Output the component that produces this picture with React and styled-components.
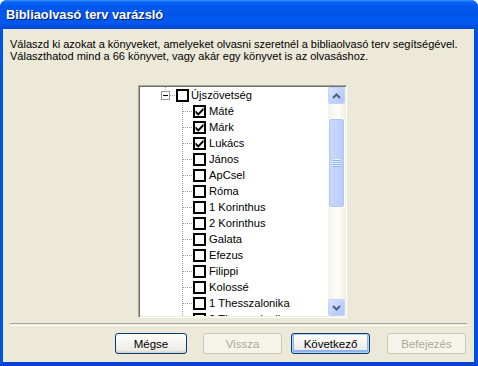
import React from 'react'
import styled, { createGlobalStyle } from 'styled-components'

const GlobalStyle = createGlobalStyle`
  html, body {
    margin: 0;
    padding: 0;
    background: #ffffff;
  }
  body {
    font-family: "Liberation Sans", Arial, sans-serif;
    font-size: 11px;
    color: #000;
  }
`

const books = [
  { name: 'Máté', checked: true },
  { name: 'Márk', checked: true },
  { name: 'Lukács', checked: true },
  { name: 'János' },
  { name: 'ApCsel' },
  { name: 'Róma' },
  { name: '1 Korinthus' },
  { name: '2 Korinthus' },
  { name: 'Galata' },
  { name: 'Efezus' },
  { name: 'Filippi' },
  { name: 'Kolossé' },
  { name: '1 Thesszalonika' },
  { name: '2 Thesszalonika' },
]

const Window = styled.div`
  width: 478px;
  height: 366px;
  display: flex;
  flex-direction: column;
  box-sizing: border-box;
  overflow: hidden;
  border-radius: 7px 7px 0 0;
  background: #0054e3;
`

const TitleBar = styled.div`
  height: 29px;
  flex: none;
  display: flex;
  align-items: center;
  padding-left: 6px;
  padding-bottom: 1px;
  box-sizing: border-box;
  background: linear-gradient(
    to bottom,
    #3d95ff 0,
    #0a66f5 2px,
    #0058ee 6px,
    #0055e8 50%,
    #0058ee 80%,
    #0046d4 100%
  );
  color: #fff;
  font-weight: bold;
  font-size: 12.8px;
  text-shadow: 1px 1px 0 #0a1f70;
`

const Frame = styled.div`
  flex: 1;
  display: flex;
  flex-direction: column;
  background: #ece9d8;
  border-left: 3px solid #0055e5;
  border-right: 4px solid #0050e0;
  border-bottom: 4px solid #0742d0;
`

const Intro = styled.p`
  margin: 9px 0 0 7px;
  line-height: 12px;
  font-size: 11px;
`

const ListBox = styled.div`
  margin: 23px 0 0 135px;
  width: 209px;
  height: 233px;
  box-sizing: border-box;
  background: #fff;
  border-top: 1px solid #aca899;
  border-left: 1px solid #aca899;
  border-right: 1px solid #fff;
  border-bottom: 1px solid #fff;
  box-shadow: inset 1px 1px 0 #716f64, inset -1px -1px 0 #f1efe2;
  padding: 1px;
  display: flex;
  overflow: hidden;
`

const Tree = styled.div`
  flex: 1;
  overflow: hidden;
`

const dotsV = `repeating-linear-gradient(to bottom, #a0a0a0 0 1px, transparent 1px 2px)`
const dotsH = `repeating-linear-gradient(to right, #a0a0a0 0 1px, transparent 1px 2px)`

const Row = styled.div`
  position: relative;
  height: 16px;
  display: flex;
  align-items: center;
  padding-left: ${({ $indent }) => $indent}px;
`

const RootLines = styled.span`
  position: absolute;
  left: 25px;
  top: 0;
  width: 1px;
  height: 4px;
  background: ${dotsV};
  &::after {
    content: '';
    position: absolute;
    left: 5px;
    top: 8px;
    width: 6px;
    height: 1px;
    background: ${dotsH};
  }
`

const ChildLines = styled.span`
  position: absolute;
  left: 42px;
  top: 0;
  width: 1px;
  height: 16px;
  background: ${dotsV};
  &::after {
    content: '';
    position: absolute;
    left: 1px;
    top: 8px;
    width: 10px;
    height: 1px;
    background: ${dotsH};
  }
`

const Expander = styled.span`
  position: absolute;
  left: 21px;
  top: 4px;
  width: 9px;
  height: 9px;
  box-sizing: border-box;
  border: 1px solid #919b9c;
  background: #fff;
  &::after {
    content: '';
    position: absolute;
    left: 1px;
    top: 3px;
    width: 5px;
    height: 1px;
    background: #000;
  }
`

const Box = styled.span`
  width: 13px;
  height: 13px;
  flex: none;
  box-sizing: border-box;
  border: 2px solid #000;
  background: #fff;
  display: flex;
  align-items: center;
  justify-content: center;
`

const Label = styled.span`
  margin-left: ${({ $gap }) => $gap}px;
  white-space: nowrap;
  line-height: 16px;
  font-size: 11.2px;
`

const ScrollBar = styled.div`
  width: 17px;
  flex: none;
  display: flex;
  flex-direction: column;
  background: linear-gradient(to right, #f3f1ec, #fefefb 60%, #f0efe8);
`

const ArrowButton = styled.div`
  width: 17px;
  height: 17px;
  box-sizing: border-box;
  border: 1px solid #fff;
  border-radius: 2px;
  background: linear-gradient(135deg, #dbe6fd, #bcd0fb 60%, #b0c6f8);
  outline: 1px solid #c3d3fd;
  outline-offset: -1px;
  display: flex;
  align-items: center;
  justify-content: center;
`

const Track = styled.div`
  flex: 1;
  padding-top: 14px;
`

const Thumb = styled.div`
  height: 90px;
  box-sizing: border-box;
  border: 1px solid #fff;
  border-radius: 3px;
  background: linear-gradient(to right, #c9d8fc, #c2d3fd 50%, #b8cbf9);
  box-shadow: inset 0 0 0 1px #b2c6f4;
  display: flex;
  align-items: center;
  justify-content: center;
`

const Grip = styled.span`
  width: 7px;
  height: 8px;
  background: repeating-linear-gradient(
    to bottom,
    #eef4fe 0 1px,
    #8cb0f8 1px 2px
  );
`

const Separator = styled.div`
  margin: auto 7px 0 7px;
  height: 1px;
  border-top: 1px solid #aca899;
  border-bottom: 1px solid #fff;
`

const ButtonRow = styled.div`
  display: flex;
  padding: 7px 0 8px 112px;
`

const Button = styled.button`
  width: ${({ $w }) => $w}px;
  height: 21px;
  margin-right: ${({ $mr }) => $mr}px;
  box-sizing: border-box;
  font-family: "Liberation Sans", Arial, sans-serif;
  font-size: 11.5px;
  padding: 0;
  border-radius: 3px;
  border: 1px solid #003c74;
  color: #000;
  background: linear-gradient(to bottom, #fff 0, #f6f5f0 40%, #ecebe6 85%, #d6d0c5 100%);
  ${({ $default }) =>
    $default &&
    `
    box-shadow: inset 0 0 0 1px #b9d1fa, inset 0 -1px 0 2px #92b1ef;
  `}
  &:disabled {
    border-color: #c9c7ba;
    background: #f5f4ea;
    color: #aca899;
  }
`

const Check = () => (
  <svg width="9" height="9" viewBox="0 0 9 9">
    <path d="M0.5 3.2 L3.2 5.9 L8.5 0.6 L8.5 3.4 L3.2 8.7 L0.5 6 Z" fill="#000" />
  </svg>
)

const UpArrow = () => (
  <svg width="9" height="6" viewBox="0 0 9 6">
    <path d="M1 5 L4.5 1.5 L8 5" fill="none" stroke="#4d6185" strokeWidth="2" />
  </svg>
)

const DownArrow = () => (
  <svg width="9" height="6" viewBox="0 0 9 6">
    <path d="M1 1 L4.5 4.5 L8 1" fill="none" stroke="#4d6185" strokeWidth="2" />
  </svg>
)

const App = () => (
  <>
    <GlobalStyle />
    <Window>
      <TitleBar>Bibliaolvasó terv varázsló</TitleBar>
      <Frame>
        <Intro>
          Válaszd ki azokat a könyveket, amelyeket olvasni szeretnél a bibliaolvasó terv segítségével.
          <br />
          Választhatod mind a 66 könyvet, vagy akár egy könyvet is az olvasáshoz.
        </Intro>
        <ListBox>
          <Tree>
            <Row $indent={36}>
              <RootLines />
              <Expander />
              <Box />
              <Label $gap={2}>Újszövetség</Label>
            </Row>
            {books.map((b) => (
              <Row key={b.name} $indent={53}>
                <ChildLines />
                <Box>{b.checked && <Check />}</Box>
                <Label $gap={3}>{b.name}</Label>
              </Row>
            ))}
          </Tree>
          <ScrollBar>
            <ArrowButton>
              <UpArrow />
            </ArrowButton>
            <Track>
              <Thumb>
                <Grip />
              </Thumb>
            </Track>
            <ArrowButton>
              <DownArrow />
            </ArrowButton>
          </ScrollBar>
        </ListBox>
        <Separator />
        <ButtonRow>
          <Button $w={72} $mr={16}>Mégse</Button>
          <Button $w={79} $mr={9} disabled>Vissza</Button>
          <Button $w={79} $mr={17} $default>Következő</Button>
          <Button $w={79} $mr={0} disabled>Befejezés</Button>
        </ButtonRow>
      </Frame>
    </Window>
  </>
)

export default App
